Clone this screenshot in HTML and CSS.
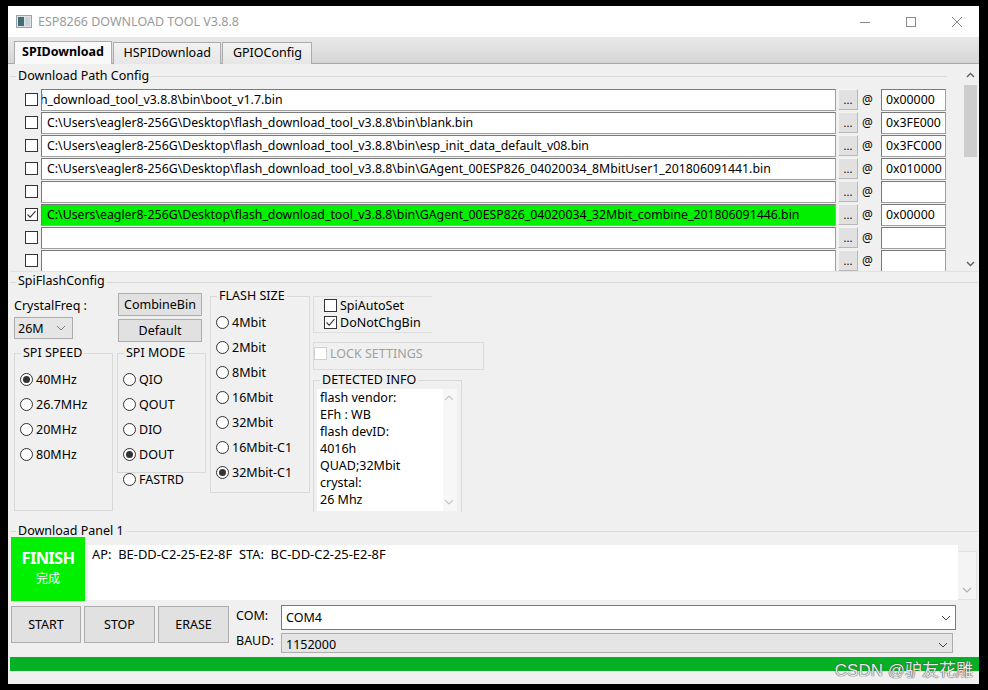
FILE: index.html
```html
<!DOCTYPE html>
<html>
<head>
<meta charset="utf-8">
<title>ESP8266 DOWNLOAD TOOL V3.8.8</title>
<link rel="stylesheet" href="styles.css">
</head>
<body>
<div class="win">
  <div class="titlebar">
    <svg class="appicon" width="16" height="13" viewBox="0 0 16 13"><rect x="0.5" y="0.5" width="15" height="12" fill="#dfe3e6" stroke="#9aa3aa"/><rect x="2" y="2" width="6" height="9" fill="#3f6f74"/><rect x="9" y="2" width="5" height="9" fill="#c9d2d8"/></svg>
    <span class="title">ESP8266 DOWNLOAD TOOL V3.8.8</span>
    <div class="winctl">
      <svg width="12" height="12" viewBox="0 0 12 12"><line x1="1" y1="6.5" x2="11" y2="6.5" stroke="#8a8a8a" stroke-width="1"/></svg>
      <svg width="12" height="12" viewBox="0 0 12 12"><rect x="1.5" y="1.5" width="9" height="9" fill="none" stroke="#8a8a8a" stroke-width="1"/></svg>
      <svg width="12" height="12" viewBox="0 0 12 12"><path d="M1 1 L11 11 M11 1 L1 11" stroke="#8a8a8a" stroke-width="1"/></svg>
    </div>
  </div>
  <div class="tabbar">
    <div class="tab active">SPIDownload</div>
    <div class="tab">HSPIDownload</div>
    <div class="tab">GPIOConfig</div>
  </div>
  <div class="content">
    <div class="paths">
      <div class="pathmain">
        <div class="sect-title"><span>Download Path Config</span></div>
        <div class="row"><span class="cb"></span><div class="pathin"><span class="shift">h_download_tool_v3.8.8\bin\boot_v1.7.bin</span></div><span class="dots">...</span><span class="at">@</span><div class="offin">0x00000</div></div>
        <div class="row"><span class="cb"></span><div class="pathin">C:\Users\eagler8-256G\Desktop\flash_download_tool_v3.8.8\bin\blank.bin</div><span class="dots">...</span><span class="at">@</span><div class="offin">0x3FE000</div></div>
        <div class="row"><span class="cb"></span><div class="pathin">C:\Users\eagler8-256G\Desktop\flash_download_tool_v3.8.8\bin\esp_init_data_default_v08.bin</div><span class="dots">...</span><span class="at">@</span><div class="offin">0x3FC000</div></div>
        <div class="row"><span class="cb"></span><div class="pathin">C:\Users\eagler8-256G\Desktop\flash_download_tool_v3.8.8\bin\GAgent_00ESP826_04020034_8MbitUser1_201806091441.bin</div><span class="dots">...</span><span class="at">@</span><div class="offin">0x010000</div></div>
        <div class="row"><span class="cb"></span><div class="pathin"></div><span class="dots">...</span><span class="at">@</span><div class="offin"></div></div>
        <div class="row"><span class="cb checked"><svg width="11" height="11" viewBox="0 0 11 11"><path d="M1.5 5.5 L4.2 8.2 L9.5 2.2" fill="none" stroke="#333" stroke-width="1.1"/></svg></span><div class="pathin green">C:\Users\eagler8-256G\Desktop\flash_download_tool_v3.8.8\bin\GAgent_00ESP826_04020034_32Mbit_combine_201806091446.bin</div><span class="dots">...</span><span class="at">@</span><div class="offin green">0x00000</div></div>
        <div class="row"><span class="cb"></span><div class="pathin"></div><span class="dots">...</span><span class="at">@</span><div class="offin"></div></div>
        <div class="row"><span class="cb"></span><div class="pathin"></div><span class="dots">...</span><span class="at">@</span><div class="offin"></div></div>
      </div>
      <div class="vscroll">
        <svg class="arrow" width="15" height="15" viewBox="0 0 15 15"><path d="M4 9 L7.5 5.5 L11 9" fill="none" stroke="#606060" stroke-width="1.4"/></svg>
        <div class="thumb"></div>
        <div class="track"></div>
        <svg class="arrow" width="15" height="15" viewBox="0 0 15 15"><path d="M4 6 L7.5 9.5 L11 6" fill="none" stroke="#606060" stroke-width="1.4"/></svg>
      </div>
    </div>

    <div class="spi">
      <div class="sect-title"><span>SpiFlashConfig</span></div>
      <div class="spi-body">
        <div class="col-a">
          <div class="lbl crystal">CrystalFreq :</div>
          <div class="select">26M<svg width="10" height="6" viewBox="0 0 10 6"><path d="M1 1 L5 5 L9 1" fill="none" stroke="#7a7a7a" stroke-width="1"/></svg></div>
          <fieldset class="gb speed">
            <legend>SPI SPEED</legend>
            <div class="radio"><span class="rd on"></span>40MHz</div>
            <div class="radio"><span class="rd"></span>26.7MHz</div>
            <div class="radio"><span class="rd"></span>20MHz</div>
            <div class="radio"><span class="rd"></span>80MHz</div>
          </fieldset>
        </div>
        <div class="col-b">
          <div class="btn combine">CombineBin</div>
          <div class="btn deflt">Default</div>
          <fieldset class="gb mode">
            <legend>SPI MODE</legend>
            <div class="radio"><span class="rd"></span>QIO</div>
            <div class="radio"><span class="rd"></span>QOUT</div>
            <div class="radio"><span class="rd"></span>DIO</div>
            <div class="radio"><span class="rd on"></span>DOUT</div>
          </fieldset>
          <div class="radio fastrd"><span class="rd"></span>FASTRD</div>
        </div>
        <div class="col-c">
          <fieldset class="gb flash">
            <legend>FLASH SIZE</legend>
            <div class="radio"><span class="rd"></span>4Mbit</div>
            <div class="radio"><span class="rd"></span>2Mbit</div>
            <div class="radio"><span class="rd"></span>8Mbit</div>
            <div class="radio"><span class="rd"></span>16Mbit</div>
            <div class="radio"><span class="rd"></span>32Mbit</div>
            <div class="radio"><span class="rd"></span>16Mbit-C1</div>
            <div class="radio"><span class="rd on"></span>32Mbit-C1</div>
          </fieldset>
        </div>
        <div class="col-d">
          <div class="autobox">
            <div class="chk"><span class="cb"></span>SpiAutoSet</div>
            <div class="chk"><span class="cb checked"><svg width="11" height="11" viewBox="0 0 11 11"><path d="M1.5 5.5 L4.2 8.2 L9.5 2.2" fill="none" stroke="#333" stroke-width="1.1"/></svg></span>DoNotChgBin</div>
          </div>
          <div class="lockbox"><span class="cb dis"></span>LOCK SETTINGS</div>
          <fieldset class="gb detected">
            <legend>DETECTED INFO</legend>
            <div class="infowrap">
              <div class="info">flash vendor:<br>EFh : WB<br>flash devID:<br>4016h<br>QUAD;32Mbit<br>crystal:<br>26 Mhz</div>
              <div class="infoscroll">
                <svg width="12" height="10" viewBox="0 0 12 10"><path d="M2 7 L6 3 L10 7" fill="none" stroke="#c8c8c8" stroke-width="1.2"/></svg>
                <svg width="12" height="10" viewBox="0 0 12 10"><path d="M2 3 L6 7 L10 3" fill="none" stroke="#c8c8c8" stroke-width="1.2"/></svg>
              </div>
            </div>
          </fieldset>
        </div>
      </div>
    </div>

    <div class="dl">
      <div class="sect-title"><span>Download Panel 1</span></div>
      <div class="dl-row">
        <div class="finish"><div class="f1">FINISH</div><div class="f2">完成</div></div>
        <div class="log">AP:&nbsp; BE-DD-C2-25-E2-8F&nbsp; STA:&nbsp; BC-DD-C2-25-E2-8F</div>
        <div class="logscroll"><svg width="12" height="10" viewBox="0 0 12 10"><path d="M2 3 L6 7 L10 3" fill="none" stroke="#b0b0b0" stroke-width="1.2"/></svg></div>
      </div>
    </div>

    <div class="controls">
      <div class="btn big start">START</div>
      <div class="btn big">STOP</div>
      <div class="btn big">ERASE</div>
      <div class="labels"><div>COM:</div><div>BAUD:</div></div>
      <div class="combos">
        <div class="combo com">COM4<svg width="10" height="6" viewBox="0 0 10 6"><path d="M1 1 L5 5 L9 1" fill="none" stroke="#444" stroke-width="1"/></svg></div>
        <div class="combo baud">1152000<svg width="10" height="6" viewBox="0 0 10 6"><path d="M1 1 L5 5 L9 1" fill="none" stroke="#444" stroke-width="1"/></svg></div>
      </div>
    </div>
    <div class="progress"></div>
  </div>
  <div class="watermark">CSDN @驴友花雕</div>
</div>
</body>
</html>
```
FILE: styles.css
```css
* { box-sizing: border-box; }
html, body { margin: 0; padding: 0; }
body {
  background: #000;
  width: 988px;
  height: 690px;
  overflow: hidden;
  font-family: "Noto Sans", "Noto Sans CJK SC", sans-serif;
  font-size: 12px;
  color: #000;
}
.win {
  position: relative;
  width: 971px;
  height: 678px;
  margin: 6px 0 0 8px;
  background: #f0f0f0;
  display: flex;
  flex-direction: column;
}
.titlebar {
  height: 31px;
  background: #fff;
  display: flex;
  align-items: center;
}
.appicon { margin-left: 8px; }
.title {
  margin-left: 6px;
  color: #9a9a9a;
  font-size: 12.5px;
}
.winctl {
  margin-left: auto;
  display: flex;
  gap: 34px;
  margin-right: 16px;
}
.tabbar {
  height: 27px;
  background: linear-gradient(#e9e9e9, #d5d5d5);
  border-bottom: 1px solid #a9a9a9;
  display: flex;
  align-items: flex-end;
  padding-left: 6px;
}
.tab {
  height: 22px;
  margin-bottom: -1px;
  border: 1px solid #acacac;
  border-bottom: none;
  background: linear-gradient(#f2f2f2, #e6e6e6);
  padding: 0 9.5px;
  line-height: 20px;
  font-size: 12.5px;
  margin-right: 1px;
}
.tab.active {
  background: #f9f9f9;
  font-weight: bold;
  height: 23px;
  padding: 0 7px;
}
.content {
  flex: 1;
  display: flex;
  flex-direction: column;
  padding: 0 1px 0 2px;
}
.sect-title {
  display: flex;
  align-items: center;
  height: 17px;
}
.sect-title::before {
  content: "";
  width: 6px;
  border-top: 1px solid #d9d9d9;
  margin-right: 2px;
  margin-top: 2px;
}
.sect-title::after {
  content: "";
  flex: 1;
  border-top: 1px solid #d9d9d9;
  margin-left: 2px;
  margin-top: 2px;
}
.sect-title span { line-height: 14px; font-size: 12.5px; }

/* paths */
.paths {
  margin-top: 3px;
  height: 204px;
  display: flex;
  overflow: hidden;
}
.pathmain { flex: 1; }
.paths .sect-title { height: 21px; padding-bottom: 4px; }
.row {
  height: 23px;
  display: flex;
  align-items: center;
}
.cb {
  width: 13px;
  height: 13px;
  border: 1px solid #333;
  background: #fff;
  display: inline-flex;
  align-items: center;
  justify-content: center;
  flex: none;
}
.row .cb { margin-left: 15px; }
.cb.dis { border-color: #cfcfcf; }
.pathin {
  margin-left: 3px;
  width: 795px;
  height: 22px;
  border: 1px solid #a0a0a0;
  border-top-color: #7a7a7a;
  border-left-color: #7a7a7a;
  background: #fff;
  line-height: 20px;
  padding-left: 5px;
  white-space: nowrap;
  overflow: hidden;
  font-size: 12.3px;
}
.shift { margin-left: -7px; }
.green { background: #00f000; }
.dots {
  margin-left: 2px;
  width: 20px;
  height: 21px;
  background: #e1e1e1;
  border: 1px solid #f4f4f4;
  border-right-color: #b8b8b8;
  border-bottom-color: #b8b8b8;
  text-align: center;
  line-height: 20px;
  font-size: 11px;
  flex: none;
}
.at {
  width: 23px;
  text-align: center;
  font-size: 12px;
  padding-right: 4px;
}
.offin {
  width: 65px;
  height: 22px;
  border: 1px solid #a0a0a0;
  border-top-color: #7a7a7a;
  border-left-color: #7a7a7a;
  background: #fff;
  line-height: 20px;
  padding-left: 4px;
  font-size: 12.3px;
}
.vscroll {
  width: 15px;
  margin-left: 16px;
  display: flex;
  flex-direction: column;
  background: #f0f0f0;
}
.vscroll .arrow { flex: none; margin-top: 1px; }
.thumb {
  margin-top: 2px;
  height: 72px;
  background: #cdcdcd;
  margin-left: 1px;
  margin-right: 1px;
}
.track { flex: 1; }

/* spi */
.spi { height: 250px; border-top: 1px solid #e2e2e2; }
.spi > .sect-title { height: 17px; padding-top: 1px; }
.spi-body {
  display: flex;
  align-items: flex-start;
  padding-left: 4px;
}
.col-a { width: 99px; }
.lbl.crystal { margin-top: 9px; line-height: 16px; font-size: 12.5px; }
.select {
  margin-top: 3px;
  width: 59px;
  height: 22px;
  border: 1px solid #adadad;
  background: #e5e5e5;
  display: flex;
  align-items: center;
  justify-content: space-between;
  padding: 0 6px 0 3px;
  font-size: 12.5px;
}
fieldset.gb {
  margin: 0;
  padding: 0;
  border: 1px solid #d9d9d9;
  min-width: 0;
}
fieldset.gb legend {
  line-height: 14px;
  font-size: 12.5px;
  padding: 0 2px;
  margin-left: 6px;
}
.gb .radio:first-of-type { margin-top: 7px; }
.radio {
  height: 25px;
  display: flex;
  align-items: center;
  font-size: 12.5px;
  padding-left: 5px;
}
.rd {
  width: 13px;
  height: 13px;
  border: 1px solid #333;
  border-radius: 50%;
  background: #fff;
  margin-right: 3px;
  display: inline-flex;
  align-items: center;
  justify-content: center;
  flex: none;
}
.rd.on::after {
  content: "";
  width: 7px;
  height: 7px;
  border-radius: 50%;
  background: #333;
}
.gb.speed { margin-top: 7px; height: 165px; }
.col-b { width: 93px; margin-left: 4px; }
.btn {
  background: #e1e1e1;
  border: 1px solid #adadad;
  display: flex;
  align-items: center;
  justify-content: center;
  font-size: 12.5px;
}
.btn.combine { margin-top: 4px; margin-left: 1px; width: 84px; height: 23px; }
.btn.deflt { margin-top: 3px; margin-left: 1px; width: 84px; height: 23px; }
.gb.mode { margin-top: 4px; width: 89px; height: 127px; }
.radio.fastrd { margin-top: -6px; padding-left: 6px; }
.gb.flash { width: 100px; height: 204px; }
.col-d { margin-left: 3px; }
.autobox {
  margin-top: 7px;
  width: 119px;
  height: 37px;
  border: 1px solid #dedede;
  border-right: none;
  padding-left: 10px;
  padding-top: 0;
}
.chk {
  display: flex;
  align-items: center;
  height: 17px;
  font-size: 12.5px;
}
.chk .cb { margin-right: 3px; }
.lockbox {
  margin-top: 9px;
  width: 171px;
  height: 28px;
  border: 1px solid #dcdcdc;
  display: flex;
  align-items: flex-start;
  padding-top: 4px;
  color: #a0a0a0;
  font-size: 12.5px;
  line-height: 14px;
}
.lockbox .cb { margin-right: 3px; margin-left: 0; }
.gb.detected { margin-top: 3px; width: 149px; height: 139px; border-bottom: none; }
.infowrap {
  display: flex;
  margin-left: 3px;
  background: #fff;
  width: 140px;
  height: 122px;
  margin-top: 2px;
}
.info {
  width: 126px;
  padding: 0 0 0 3px;
  line-height: 17px;
  font-size: 12.5px;
}
.infoscroll {
  width: 14px;
  display: flex;
  flex-direction: column;
  justify-content: space-between;
  padding: 4px 0 4px 0;
  background: #f7f7f7;
}

/* download panel */
.dl { height: 80px; }
.dl .sect-title { height: 16px; padding-top: 3px; }
.dl-row { display: flex; height: 64px; }
.finish {
  margin-left: 1px;
  width: 74px;
  height: 64px;
  background: #00f000;
  color: #fff;
  text-align: center;
  padding-top: 10px;
}
.f1 { font-weight: bold; font-size: 16.5px; line-height: 22px; letter-spacing: -0.7px; }
.f2 { font-size: 12px; line-height: 18px; margin-top: 1px; }
.log {
  margin-left: 3px;
  margin-top: 8px;
  width: 870px;
  height: 55px;
  background: #fff;
  padding: 1px 4px;
  line-height: 16px;
  font-size: 12.9px;
}
.logscroll {
  margin-top: 14px;
  width: 19px;
  height: 49px;
  border: 1px solid #e3e3e3;
  border-left: none;
  background: #f4f4f4;
  display: flex;
  align-items: flex-end;
  justify-content: center;
  padding-bottom: 4px;
}

/* controls */
.controls { height: 52px; display: flex; align-items: flex-start; }
.btn.big { margin-top: 5px; height: 37px; width: 71px; margin-left: 3px; }
.btn.big.start { margin-left: 1px; width: 70px; }
.labels {
  margin-left: 7px;
  width: 45px;
  padding-top: 6px;
  font-size: 12.5px;
}
.labels div { height: 25px; line-height: 18px; }
.combos { margin-top: 4px; }
.combo {
  display: flex;
  align-items: center;
  justify-content: space-between;
  padding: 0 4px 0 4px;
  font-size: 12.5px;
}
.combo.com {
  width: 675px;
  height: 25px;
  background: #fff;
  border: 1px solid #7a7a7a;
}
.combo.baud {
  margin-top: 3px;
  width: 672px;
  height: 20px;
  background: #e5e5e5;
  border: 1px solid #adadad;
  padding-top: 3px;
}
.progress {
  margin-top: 4px;
  height: 14px;
  background: #06b025;
  margin-right: -1px;
}
.watermark {
  position: absolute;
  right: 6px;
  bottom: 3px;
  font-family: "Liberation Sans", "Noto Sans CJK SC", sans-serif;
  font-size: 17px;
  color: #e8e8e8;
  text-shadow: 0 0 1px #444, 0 0 1px #444;
}
```
